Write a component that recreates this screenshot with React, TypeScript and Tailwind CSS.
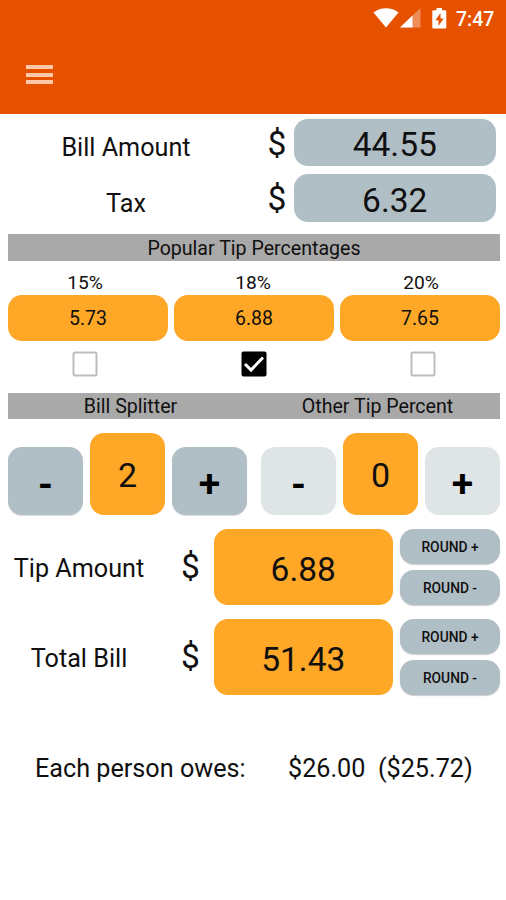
import React from "react";

const tips = [
  { percent: "15%", amount: "5.73", checked: false },
  { percent: "18%", amount: "6.88", checked: true },
  { percent: "20%", amount: "7.65", checked: false },
];

const App: React.FC = () => {
  return (
    <div className="w-[506px] h-[900px] overflow-hidden bg-white text-[#101010] font-[Roboto,sans-serif]">
      <Header />
      <main className="flex flex-col pl-2 pr-1.5">
        <div className="flex flex-col gap-[8.5px] pt-[5px] pr-1">
          <AmountRow label="Bill Amount" value="44.55" height="h-[46.5px]" />
          <AmountRow label="Tax" value="6.32" height="h-[48px]" />
        </div>

        <div className="mt-3 h-[26.5px] bg-[#a9a9a9] flex items-center justify-center pt-[2px] text-[19.6px]">
          Popular Tip Percentages
        </div>

        <TipOptions />

        <div className="mt-4 h-[26.5px] bg-[#a9a9a9] flex items-center text-[19.6px] leading-[26px]">
          <span className="flex-1 pt-[3px] text-center">Bill Splitter</span>
          <span className="flex-1 pt-[3px] pl-[2px] text-center">
            Other Tip Percent
          </span>
        </div>

        <div className="flex justify-between mt-3.5">
          <Stepper value="2" />
          <Stepper value="0" disabled />
        </div>

        <div className="flex flex-col gap-3.5 mt-[14.5px]">
          <ResultRow label="Tip Amount" value="6.88" />
          <ResultRow label="Total Bill" value="51.43" />
        </div>

        <div className="flex mt-[57px] pl-[27px] text-[25.2px] leading-8">
          <span className="w-[253px] pt-px">Each person owes:</span>
          <span className="pt-px whitespace-pre">$26.00  ($25.72)</span>
        </div>
      </main>
    </div>
  );
};

export default App;

const Header = () => {
  return (
    <header className="h-[114px] bg-[#e65100] text-white">
      <div className="flex items-center justify-end h-[38px] pr-[11px]">
        <div className="flex items-center pb-[2px]">
          <svg width="26" height="20" viewBox="0 0 26 20" fill="currentColor">
            <path d="M.5 4.500C7-1.200 19-1.200 25.500 4.500L13 19.500Z" />
          </svg>
          <svg className="ml-px" width="21" height="20" viewBox="0 0 21 20" fill="currentColor">
            <path d="M20.500 0V19.500H0Z" opacity="0.35" />
            <path d="M12.500 7.500V19.500H0Z" />
          </svg>
          <svg className="ml-[11px]" width="15" height="21" viewBox="0 0 15 21">
            <path
              fill="currentColor"
              d="M4.500 0h5.500v2.300h3a1.300 1.300 0 0 1 1.300 1.300v15.600a1.300 1.300 0 0 1-1.300 1.300H1.600A1.300 1.300 0 0 1 .3 19.200V3.600A1.300 1.300 0 0 1 1.600 2.300h2.900Z"
            />
            <path fill="#e65100" d="M8.500 5 3.300 12.300H6.500V18L11.700 10.500H8.500Z" />
          </svg>
        </div>
        <span className="ml-[9px] w-[39px] pt-px text-[19.5px] font-medium whitespace-nowrap">
          7:47
        </span>
      </div>
      <button className="flex flex-col gap-[3.5px] mt-[27px] ml-[26px]">
        <span className="w-[27px] h-1 bg-[#ffc9a9]" />
        <span className="w-[27px] h-1 bg-[#ffc9a9]" />
        <span className="w-[27px] h-1 bg-[#ffc9a9]" />
      </button>
    </header>
  );
};

interface IAmountRowProps {
  label: string;
  value: string;
  height: string;
}

const AmountRow = ({ label, value, height }: IAmountRowProps) => {
  return (
    <div className={`flex items-center ${height}`}>
      <span className="w-[236px] pt-[11px] text-center text-[25.2px]">{label}</span>
      <span className="w-[49.5px] pl-[23.5px] pt-[3px] text-[33.5px]">$</span>
      <div className="flex items-center justify-center flex-1 h-full pt-[5.5px] rounded-[14px] bg-[#b0bec5] text-[33.5px]">
        {value}
      </div>
    </div>
  );
};

const TipOptions = () => {
  return (
    <div className="mt-[9px]">
      <div className="grid grid-cols-3 h-[25px] -ml-[7px] -mr-[7px] pr-[2px] text-center text-[19.2px] leading-[25px]">
        {tips.map((tip) => (
          <span key={tip.percent}>{tip.percent}</span>
        ))}
      </div>
      <div className="grid grid-cols-3 gap-1.5">
        {tips.map((tip) => (
          <div
            key={tip.percent}
            className="flex items-center justify-center h-[46px] pt-[3px] rounded-[14px] bg-[#ffa726] text-[19.5px]"
          >
            {tip.amount}
          </div>
        ))}
      </div>
      <div className="grid grid-cols-3 justify-items-center h-[26px] mt-[10px] -ml-[7px] -mr-[7px]">
        {tips.map((tip) => (
          <Checkbox key={tip.percent} checked={tip.checked} />
        ))}
      </div>
    </div>
  );
};

const Checkbox = ({ checked }: { checked: boolean }) => {
  return (
    <svg width="26" height="26" viewBox="0 0 26 26" fill="none">
      {checked ? (
        <>
          <rect x="0.500" y="0.500" width="25" height="25" rx="2" fill="#000" />
          <path d="M4 13 10 19 22 6.500" stroke="#fff" strokeWidth="3" />
        </>
      ) : (
        <rect x="1.500" y="1.500" width="23" height="23" rx="1.500" stroke="#bdbdbd" strokeWidth="2" />
      )}
    </svg>
  );
};

const Stepper = ({ value, disabled }: { value: string; disabled?: boolean }) => {
  const button = disabled
    ? "bg-[#dfe5e7]"
    : "bg-[#b0bec5] shadow-[0_1px_1px_rgba(0,0,0,0.15)]";

  return (
    <div className="flex items-end gap-[7px]">
      <button className={`w-[75px] h-[67.5px] pt-[8px] rounded-[14px] text-[38px] leading-none font-bold text-black ${button}`}>
        -
      </button>
      <div className="flex items-center justify-center w-[75px] h-[81.5px] pt-[3px] rounded-[14px] bg-[#ffa726] text-[34px]">
        {value}
      </div>
      <button className={`w-[75px] h-[67.5px] pt-[8px] rounded-[14px] text-[39px] leading-none font-semibold text-black ${button}`}>
        +
      </button>
    </div>
  );
};

const ResultRow = ({ label, value }: { label: string; value: string }) => {
  return (
    <div className="flex items-center h-[76px]">
      <span className="w-[142px] pt-[4px] text-center text-[25.2px]">{label}</span>
      <span className="w-16 pl-[31px] text-[33.5px]">$</span>
      <div className="flex items-center justify-center w-[178.5px] h-full pt-[7px] rounded-[14px] bg-[#ffa726] text-[33.5px]">
        {value}
      </div>
      <div className="flex flex-col justify-between flex-1 h-full ml-[7.5px]">
        <RoundButton>ROUND +</RoundButton>
        <RoundButton>ROUND -</RoundButton>
      </div>
    </div>
  );
};

const RoundButton = ({ children }: { children: React.ReactNode }) => {
  return (
    <button className="h-[35px] pt-[2px] rounded-[14px] bg-[#b0bec5] shadow-[0_1px_1px_rgba(0,0,0,0.2)] text-[13.8px] font-medium">
      {children}
    </button>
  );
};
